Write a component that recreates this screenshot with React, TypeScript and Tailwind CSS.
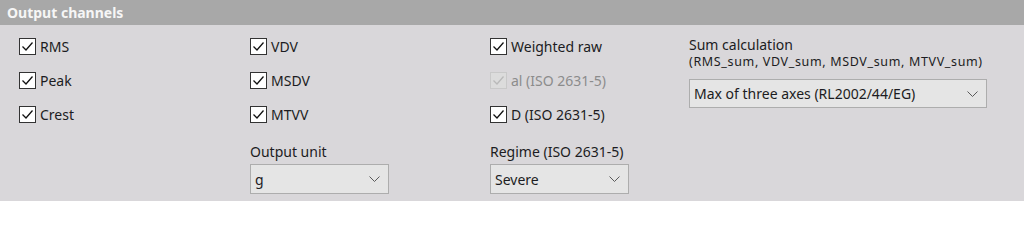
import React from "react";

function Check({ disabled = false }: { disabled?: boolean }) {
  return (
    <span
      className={
        "flex h-[17px] w-[17px] shrink-0 items-center justify-center border " +
        (disabled ? "border-[#c9c9c9] bg-[#dcdcdc]" : "border-[#333333] bg-white")
      }
    >
      <svg width="15" height="15" viewBox="0 0 15 15">
        <path
          d="M2.5 7.5 L6 11 L12.5 3.5"
          fill="none"
          stroke={disabled ? "#b9b9b9" : "#111111"}
          strokeWidth="1.3"
        />
      </svg>
    </span>
  );
}

function CheckRow({ label, disabled = false }: { label: string; disabled?: boolean }) {
  return (
    <div className="flex h-[34px] items-center gap-[4px]">
      <Check disabled={disabled} />
      <span className={disabled ? "text-[#8c8c8c]" : ""}>{label}</span>
    </div>
  );
}

function Select({ value, width }: { value: string; width: string }) {
  return (
    <div
      className={
        "flex items-center justify-between border border-[#adadad] bg-[#e5e5e5] pl-[4px] pr-[8px] " + width
      }
    >
      <span>{value}</span>
      <svg width="11" height="6" viewBox="0 0 11 6">
        <path d="M0.5 0.5 L5.5 5.5 L10.5 0.5" fill="none" stroke="#5a5a5a" strokeWidth="1" />
      </svg>
    </div>
  );
}

export default function App() {
  return (
    <div className="h-[201px] w-[1024px] overflow-hidden bg-[#d9d7da] font-['Noto_Sans',sans-serif] text-[14px] leading-[19px] text-[#1c1c22]">
      <div className="flex h-[25px] items-center bg-[#a8a8a8] pl-[7px] font-bold text-[#f6f6f6]">
        Output channels
      </div>
      <div className="flex pl-[19px] pt-[4px]">
        <div className="w-[231px]">
          <CheckRow label="RMS" />
          <CheckRow label="Peak" />
          <CheckRow label="Crest" />
        </div>
        <div className="w-[240px]">
          <CheckRow label="VDV" />
          <CheckRow label="MSDV" />
          <CheckRow label="MTVV" />
          <div className="mt-[11px]">Output unit</div>
          <Select value="g" width="mt-[3px] h-[30px] w-[139px]" />
        </div>
        <div className="w-[199px]">
          <CheckRow label="Weighted raw" />
          <CheckRow label="al (ISO 2631-5)" disabled />
          <CheckRow label="D (ISO 2631-5)" />
          <div className="mt-[11px]">Regime (ISO 2631-5)</div>
          <Select value="Severe" width="mt-[3px] h-[30px] w-[139px]" />
        </div>
        <div className="flex flex-col">
          <div className="mt-[6px]">Sum calculation</div>
          <div className="text-[12.5px] leading-[16px] tracking-[0.65px]">(RMS_sum, VDV_sum, MSDV_sum, MTVV_sum)</div>
          <Select value="Max of three axes (RL2002/44/EG)" width="mt-[9px] h-[29px] w-[298px]" />
        </div>
      </div>
    </div>
  );
}
